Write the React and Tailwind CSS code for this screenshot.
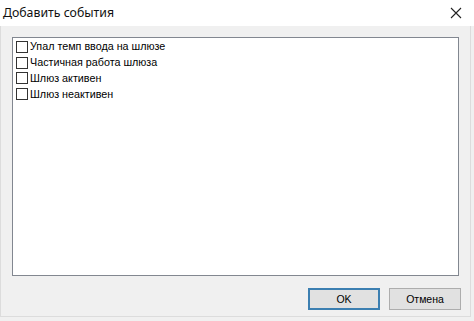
import React from 'react';

const events = [
  'Упал темп ввода на шлюзе',
  'Частичная работа шлюза',
  'Шлюз активен',
  'Шлюз неактивен',
];

export default function App() {
  return (
    <div
      className="flex h-[321px] w-[474px] flex-col bg-[#f0f0f0] text-black"
      style={{ fontFamily: '"Noto Sans", "Open Sans", sans-serif' }}
    >
      <div className="flex h-[26px] items-center justify-between bg-white pl-[3px] pr-[8px]">
        <span className="text-[12.3px] text-[#111]">Добавить события</span>
        <svg width="12" height="12" viewBox="0 0 12 12" className="mr-[4px]">
          <path d="M1 1 L11 11 M11 1 L1 11" stroke="#222" strokeWidth="1.1" fill="none" />
        </svg>
      </div>

      <div className="mb-[4px] mr-[3px] flex flex-1 flex-col border-r border-b border-l border-[#dcdcdc]">
        <div className="mx-[11px] mt-[11px] h-[239px] border border-[#828790] bg-white pt-[1px] pl-[3px] font-['Liberation_Sans',sans-serif] text-[10.75px] text-black">
          {events.map((label) => (
            <div key={label} className="flex h-[15.7px] items-center">
              <span className="mr-[2px] inline-block h-[12px] w-[12px] border border-[#333] bg-white" />
              <span className="leading-none">{label}</span>
            </div>
          ))}
        </div>

        <div className="mt-[12px] flex justify-end gap-[9px] pr-[9px] font-['Liberation_Sans',sans-serif]">
          <button className="h-[22px] w-[72px] border-2 border-[#3c7fb1] bg-[#e1e1e1] text-[10.5px] leading-none text-black">
            OK
          </button>
          <button className="h-[22px] w-[72px] border border-[#adadad] bg-[#e1e1e1] text-[10.5px] leading-none text-black">
            Отмена
          </button>
        </div>
      </div>
    </div>
  );
}
